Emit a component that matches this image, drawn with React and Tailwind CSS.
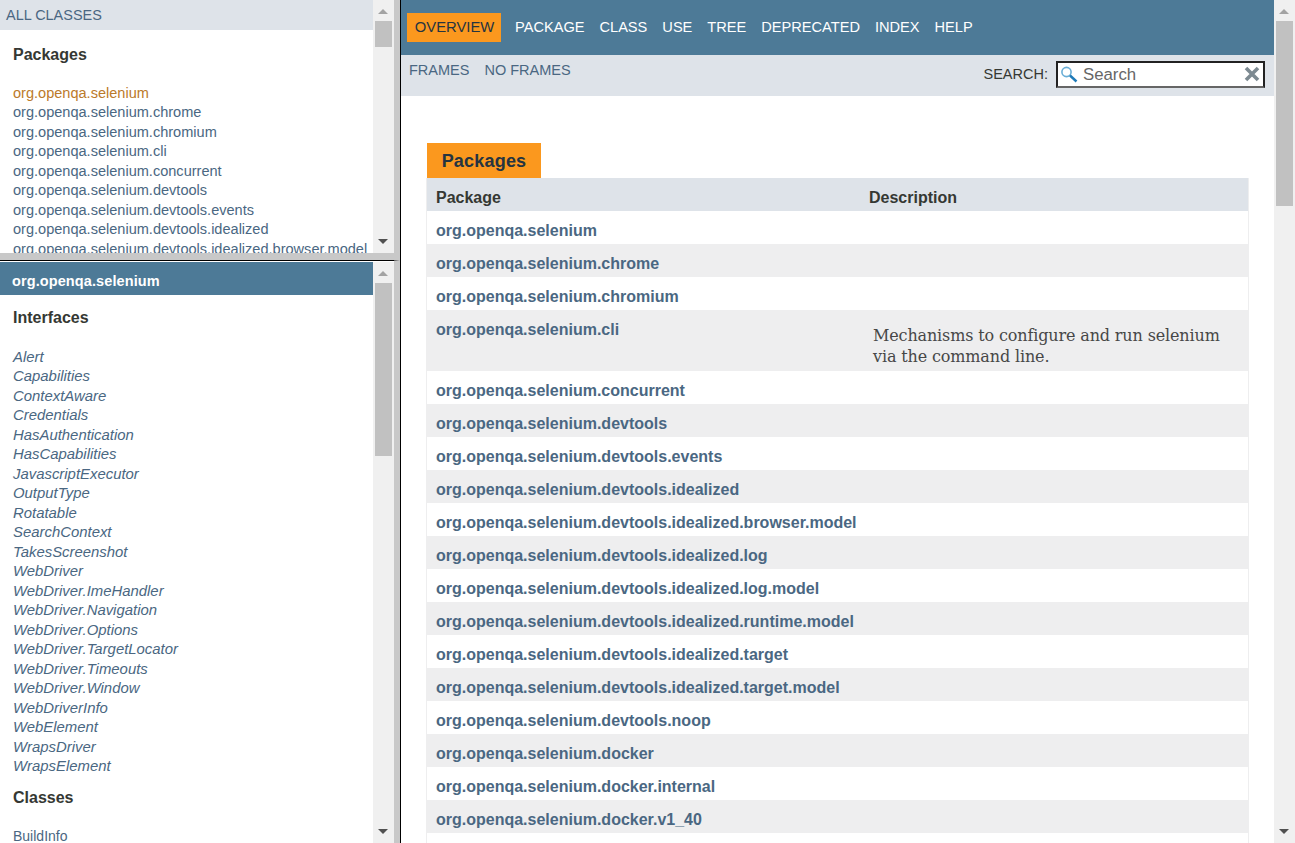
const pkgList = ["org.openqa.selenium","org.openqa.selenium.chrome","org.openqa.selenium.chromium","org.openqa.selenium.cli","org.openqa.selenium.concurrent","org.openqa.selenium.devtools","org.openqa.selenium.devtools.events","org.openqa.selenium.devtools.idealized","org.openqa.selenium.devtools.idealized.browser.model"];
const tablePkgs = ["org.openqa.selenium.concurrent","org.openqa.selenium.devtools","org.openqa.selenium.devtools.events","org.openqa.selenium.devtools.idealized","org.openqa.selenium.devtools.idealized.browser.model","org.openqa.selenium.devtools.idealized.log","org.openqa.selenium.devtools.idealized.log.model","org.openqa.selenium.devtools.idealized.runtime.model","org.openqa.selenium.devtools.idealized.target","org.openqa.selenium.devtools.idealized.target.model","org.openqa.selenium.devtools.noop","org.openqa.selenium.docker","org.openqa.selenium.docker.internal","org.openqa.selenium.docker.v1_40"];
const ifaces = ["Alert","Capabilities","ContextAware","Credentials","HasAuthentication","HasCapabilities","JavascriptExecutor","OutputType","Rotatable","SearchContext","TakesScreenshot","WebDriver","WebDriver.ImeHandler","WebDriver.Navigation","WebDriver.Options","WebDriver.TargetLocator","WebDriver.Timeouts","WebDriver.Window","WebDriverInfo","WebElement","WrapsDriver","WrapsElement"];
const nav = ["PACKAGE","CLASS","USE","TREE","DEPRECATED","INDEX","HELP"];

function Scrollbar({ thumbTop, thumbH }) {
  return (
    <div className="relative w-[21px] shrink-0 bg-[#f0f0f0] h-full">
      <div className="absolute left-[5px] top-[9px] w-0 h-0 border-x-[5px] border-x-transparent border-b-[5px] border-b-[#a3a3a3]" />
      <div className="absolute left-[2px] w-[17px] bg-[#c1c1c1]" style={{ top: thumbTop, height: thumbH }} />
      <div className="absolute left-[5px] bottom-[9px] w-0 h-0 border-x-[5px] border-x-transparent border-t-[5px] border-t-[#505050]" />
    </div>
  );
}

function Row({ name, alt }) {
  return (
    <div className={`flex h-[33px] pt-[10px] text-[16px] leading-[19px] ${alt ? "bg-[#eeeeef]" : "bg-white"}`}>
      <a className="pl-[9px] font-bold text-[#4a6782] whitespace-nowrap">{name}</a>
    </div>
  );
}

export default function App() {
  return (
    <div className="flex w-[1295px] h-[843px] overflow-hidden bg-white text-[14px] text-[#353833]" style={{ fontFamily: '"Liberation Sans", Arial, sans-serif' }}>
      <div className="flex flex-col w-[394px] shrink-0">
        <div className="flex h-[253px] shrink-0">
          <div className="flex-1 min-w-0 overflow-hidden">
            <div className="h-[30px] bg-[#dee3e9] pl-[6px] pt-[6px] text-[14.45px] leading-[18px] text-[#4a6782]">ALL CLASSES</div>
            <h2 className="pl-[13px] pt-[15px] text-[16px] leading-[19px] font-bold text-[#353833]">Packages</h2>
            <ul className="pt-[19.5px] pl-[13px] text-[14.55px] leading-[19.5px] whitespace-nowrap">
              {pkgList.map((p, i) => <li key={p} className={i === 0 ? "text-[#bb7a2a]" : "text-[#4a6782]"}>{p}</li>)}
            </ul>
          </div>
          <Scrollbar thumbTop={21} thumbH={26} />
        </div>
        <div className="h-[9px] shrink-0 bg-[#c8c8c8] pt-[7px]">
          <div className="h-px w-full bg-black" />
          <div className="h-px w-full bg-white" />
        </div>
        <div className="flex flex-1 min-h-0">
          <div className="flex-1 min-w-0 overflow-hidden">
            <div className="h-[33px] bg-[#4d7a97] pl-[12px] pt-[10px] text-[14.5px] leading-[18px] font-bold text-white tracking-[0.1px]">org.openqa.selenium</div>
            <h2 className="pl-[13px] pt-[13px] text-[16px] leading-[19px] font-bold">Interfaces</h2>
            <ul className="pt-[20.5px] pl-[13px] text-[14.9px] leading-[19.5px] italic text-[#4a6782]">
              {ifaces.map(n => <li key={n}>{n}</li>)}
            </ul>
            <h2 className="pl-[13px] pt-[11.5px] text-[16px] leading-[19px] font-bold">Classes</h2>
            <ul className="pt-[20px] pl-[13px] text-[14px] leading-[19.5px] text-[#4a6782]"><li>BuildInfo</li></ul>
          </div>
          <Scrollbar thumbTop={21} thumbH={173} />
        </div>
      </div>
      <div className="w-[6px] shrink-0 bg-[#c8c8c8] pt-[260px]">
        <div className="h-px w-full bg-gradient-to-r from-[#555] to-[#c8c8c8]" />
      </div>
      <div className="flex flex-1 min-w-0 border-l border-black">
        <div className="flex-1 min-w-0 overflow-hidden">
          <div className="h-[55px] bg-[#4d7a97] flex items-start pt-[13px] pl-[6px]">
            <div className="h-[29px] w-[94px] bg-[#fb981e] text-[#253441] text-[14.8px] flex items-center justify-center pl-[1px]">OVERVIEW</div>
            <div className="flex gap-[15px] pl-[14px] h-[29px] items-center text-white text-[14.6px]">
              {nav.map(n => <span key={n}>{n}</span>)}
            </div>
          </div>
          <div className="h-[41px] bg-[#dee3e9] flex justify-between">
            <div className="flex gap-[15px] pl-[8px] pt-[6px] text-[14.5px] leading-[19px] text-[#4a6782]"><span>FRAMES</span><span>NO FRAMES</span></div>
            <div className="flex items-start pt-[6px] pr-[9px]">
              <span className="mr-[8px] pt-[4px] text-[14.5px] leading-[18px]">SEARCH:</span>
              <div className="relative w-[209px] h-[27px] border-2 border-t-[#222] border-l-[#222] border-r-[#222] border-b-[#666] bg-white flex items-center">
                <svg className="absolute left-[3px] top-[3px]" width="18" height="18" viewBox="0 0 18 18"><circle cx="5.5" cy="6" r="4.6" fill="none" stroke="#6aaed6" strokeWidth="1.6"/><path d="M9 9.5L15.5 15.5" stroke="#1e7ab8" strokeWidth="2.4"/></svg>
                <span className="pl-[25px] text-[16.8px] text-[#666]">Search</span>
                <svg className="absolute right-[3px] top-[3px]" width="16" height="16" viewBox="0 0 16 16"><path d="M2 2L14 14M14 2L2 14" stroke="#7d8a92" strokeWidth="3.6"/></svg>
              </div>
            </div>
          </div>
          <div className="pl-[26px] pr-[26px] pt-[47px]">
            <div className="h-[35px] w-[114px] bg-[#fb981e] text-[#253441] font-bold text-[18px] tracking-[0.2px] flex items-center justify-center pt-[1px]">Packages</div>
            <div className="border-x border-[#eeeeef] -mx-px">
              <div className="flex h-[33px] bg-[#dee3e9] font-bold text-[#353833] text-[16px] leading-[19px] pt-[10px]">
                <span className="w-[442px] pl-[9px]">Package</span><span>Description</span>
              </div>
              <Row name="org.openqa.selenium" />
              <Row name="org.openqa.selenium.chrome" alt />
              <Row name="org.openqa.selenium.chromium" />
              <div className="flex h-[61px] bg-[#eeeeef] pt-[10px] text-[16px] leading-[19px]">
                <a className="w-[446px] shrink-0 pl-[9px] font-bold text-[#4a6782]">org.openqa.selenium.cli</a>
                <p className="pt-[5px] text-[16px] leading-[21px] text-[#474747] w-[360px] tracking-[-0.14px]" style={{ fontFamily: '"DejaVu Serif", Georgia, serif' }}>Mechanisms to configure and run selenium via the command line.</p>
              </div>
              {tablePkgs.map((p, i) => <Row key={p} name={p} alt={i % 2 === 1} />)}
              <div className="h-[33px] bg-white" />
            </div>
          </div>
        </div>
        <Scrollbar thumbTop={21} thumbH={185} />
      </div>
    </div>
  );
}
